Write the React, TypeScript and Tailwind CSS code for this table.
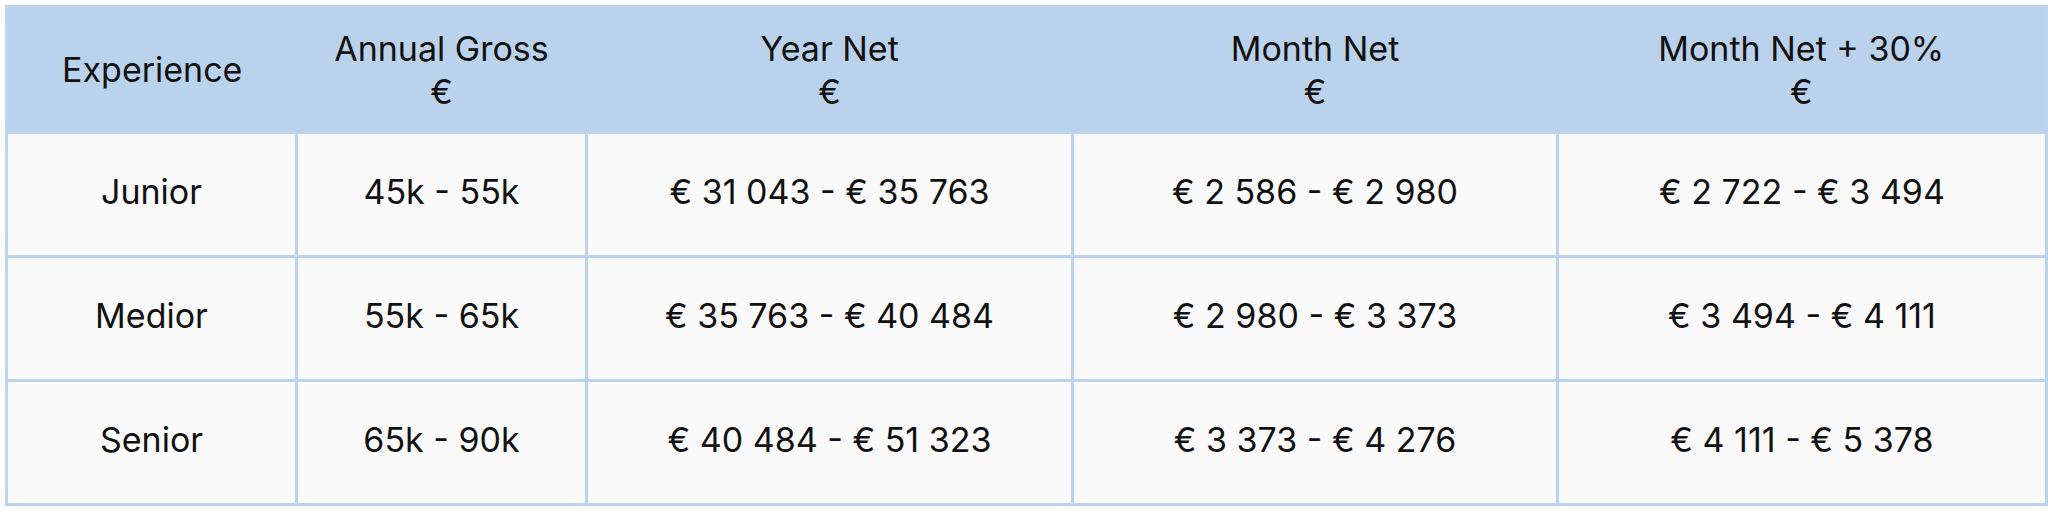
import React from 'react';

type Row = {
    level: string;
    gross: string;
    yearNet: string;
    monthNet: string;
    monthNet30: string;
};

const rows: Row[] = [
    { level: 'Junior', gross: '45k - 55k', yearNet: '€ 31 043 - € 35 763', monthNet: '€ 2 586 - € 2 980', monthNet30: '€ 2 722 - € 3 494' },
    { level: 'Medior', gross: '55k - 65k', yearNet: '€ 35 763 - € 40 484', monthNet: '€ 2 980 - € 3 373', monthNet30: '€ 3 494 - € 4 111' },
    { level: 'Senior', gross: '65k - 90k', yearNet: '€ 40 484 - € 51 323', monthNet: '€ 3 373 - € 4 276', monthNet30: '€ 4 111 - € 5 378' },
];

const headers: { title: string; euro: boolean }[] = [
    { title: 'Experience', euro: false },
    { title: 'Annual Gross', euro: true },
    { title: 'Year Net', euro: true },
    { title: 'Month Net', euro: true },
    { title: 'Month Net + 30%', euro: true },
];

const SalaryTable: React.FC = () => {
    return (
        <div className="w-[2048px] h-[512px] bg-white p-[5px] text-[#111111] font-['Inter','Liberation_Sans',sans-serif]">
            <table className="w-[2040px] border-collapse table-fixed border-[3px] border-[#bcd3ee]">
                <colgroup>
                    <col className="w-[290px]" />
                    <col className="w-[290px]" />
                    <col className="w-[486px]" />
                    <col className="w-[485px]" />
                    <col className="w-[489px]" />
                </colgroup>
                <thead>
                    <tr className="h-[126px] bg-[#bbd2ec]">
                        {headers.map((h) => (
                            <th key={h.title} className="font-normal text-[34px] leading-[43px] text-center align-middle">
                                <div>{h.title}</div>
                                {h.euro && <div>€</div>}
                            </th>
                        ))}
                    </tr>
                </thead>
                <tbody>
                    {rows.map((r) => (
                        <tr key={r.level} className="h-[124px] bg-[#fafafa]">
                            {[r.level, r.gross, r.yearNet, r.monthNet, r.monthNet30].map((v, i) => (
                                <td key={i} className="border-[3px] border-[#bcd3ee] text-center align-middle text-[34px] pb-[6px]">
                                    {v}
                                </td>
                            ))}
                        </tr>
                    ))}
                </tbody>
            </table>
        </div>
    );
};

export default function App() {
    return <SalaryTable />;
}
